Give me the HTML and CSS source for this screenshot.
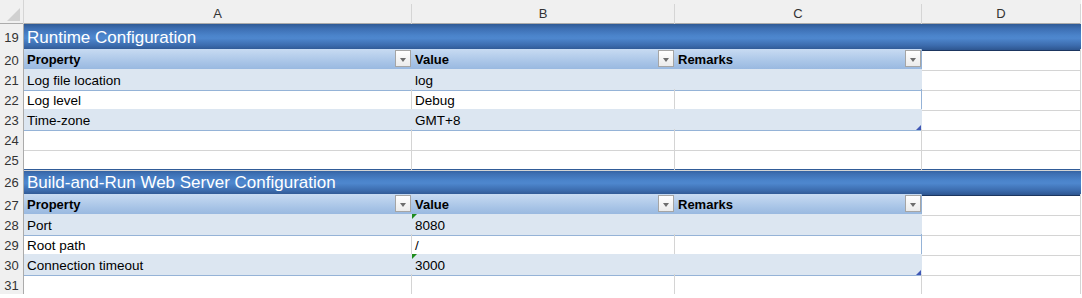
FILE: index.html
```html
<!DOCTYPE html>
<html>
<head>
  <title>Configuration</title>
  <link rel="stylesheet" href="styles.css">
</head>
<body>
  <div class="sheet">
    <div class="row colhead">
      <div class="corner"><span class="corner-tri"></span></div>
      <div class="ch">A</div>
      <div class="ch">B</div>
      <div class="ch">C</div>
      <div class="ch">D</div>
    </div>

    <div class="row title">
      <div class="rh">19</div>
      <div class="title-cell">Runtime Configuration</div>
    </div>
    <div class="row thead">
      <div class="rh">20</div>
      <div class="c th">Property<span class="dd"></span></div>
      <div class="c th">Value<span class="dd"></span></div>
      <div class="c th last">Remarks<span class="dd"></span></div>
      <div class="c"></div>
    </div>
    <div class="row band">
      <div class="rh">21</div>
      <div class="c">Log file location</div>
      <div class="c">log</div>
      <div class="c last"></div>
      <div class="c"></div>
    </div>
    <div class="row tbl">
      <div class="rh">22</div>
      <div class="c">Log level</div>
      <div class="c">Debug</div>
      <div class="c last"></div>
      <div class="c"></div>
    </div>
    <div class="row band">
      <div class="rh">23</div>
      <div class="c">Time-zone</div>
      <div class="c">GMT+8</div>
      <div class="c last"><span class="resize"></span></div>
      <div class="c"></div>
    </div>
    <div class="row">
      <div class="rh">24</div>
      <div class="c"></div><div class="c"></div><div class="c"></div><div class="c"></div>
    </div>
    <div class="row">
      <div class="rh">25</div>
      <div class="c"></div><div class="c"></div><div class="c"></div><div class="c"></div>
    </div>

    <div class="row title">
      <div class="rh">26</div>
      <div class="title-cell">Build-and-Run Web Server Configuration</div>
    </div>
    <div class="row thead">
      <div class="rh">27</div>
      <div class="c th">Property<span class="dd"></span></div>
      <div class="c th">Value<span class="dd"></span></div>
      <div class="c th last">Remarks<span class="dd"></span></div>
      <div class="c"></div>
    </div>
    <div class="row band">
      <div class="rh">28</div>
      <div class="c">Port</div>
      <div class="c"><span class="flag"></span>8080</div>
      <div class="c last"></div>
      <div class="c"></div>
    </div>
    <div class="row tbl">
      <div class="rh">29</div>
      <div class="c">Root path</div>
      <div class="c">/</div>
      <div class="c last"></div>
      <div class="c"></div>
    </div>
    <div class="row band">
      <div class="rh">30</div>
      <div class="c">Connection timeout</div>
      <div class="c"><span class="flag"></span>3000</div>
      <div class="c last"><span class="resize"></span></div>
      <div class="c"></div>
    </div>
    <div class="row">
      <div class="rh">31</div>
      <div class="c"></div><div class="c"></div><div class="c"></div><div class="c"></div>
    </div>
  </div>
</body>
</html>
```

FILE: styles.css
```css
body {
margin: 0;
background-color: #fff;
color: #000;
font-family: "Liberation Sans", Arial, sans-serif;
font-size: 13px;
overflow: hidden;
}
.sheet {
width: 1081px;
}
.row {
display: grid;
grid-template-columns: 24px 388px 263px 247px 159px;
height: 20px;
}
.row > div {
box-sizing: border-box;
}
.colhead {
height: 24px;
background-color: #f0f0f0;
padding-top: 4px;
border-bottom: 1px solid #ababab;
box-sizing: border-box;
}
.corner {
position: relative;
border-right: 1px solid #d5d5d5;
margin-top: -4px;
}
.corner-tri {
position: absolute;
right: 3px;
bottom: 3px;
width: 0;
height: 0;
border-left: 13px solid transparent;
border-bottom: 13px solid #d0d0d0;
}
.ch {
border-right: 1px solid #d5d5d5;
text-align: center;
line-height: 20px;
color: #333;
font-size: 13px;
}
.rh {
background-color: #f0f0f0;
border-right: 1px solid #ababab;
border-bottom: 1px solid #d5d5d5;
color: #333;
text-align: center;
padding-top: 2px;
line-height: 19px;
font-size: 13px;
}
.c {
position: relative;
border-right: 1px solid #d4d4d4;
border-bottom: 1px solid #d4d4d4;
padding: 2px 3px 0;
line-height: 19px;
font-size: 13.5px;
white-space: nowrap;
}
.title {
height: 25px;
}
.title .rh {
padding-top: 4px;
}
.title-cell {
grid-column: 2 / 6;
background: linear-gradient(#2f5a95 0%, #3d6fb3 18%, #4b84cb 45%, #4e87ce 55%, #3c6cae 82%, #2e5690 100%);
border-bottom: 1px solid #1b355f;
color: #fff;
font-size: 17px;
padding: 1px 3px 0;
line-height: 25px;
}
.thead .th {
background: linear-gradient(#c8dbf2, #a9c5e7 60%, #97b7df);
border-right-color: transparent;
border-bottom: 1px solid #94b4dd;
font-weight: bold;
font-size: 13px;
padding-top: 1px;
padding-right: 20px;
}
.thead .th.last {
border-right-color: #95b3d7;
}
.dd {
position: absolute;
right: 0;
top: 1px;
width: 16px;
height: 17px;
box-sizing: border-box;
border: 1px solid #a5a5a5;
background: linear-gradient(#fff, #ebebeb);
}
.dd::after {
content: '';
position: absolute;
left: 4px;
top: 7px;
border-left: 3.5px solid transparent;
border-right: 3.5px solid transparent;
border-top: 4px solid #6d6d6d;
}
.band .c,
.tbl .c {
border-bottom-color: #95b3d7;
}
.band .c:nth-child(n+2):nth-child(-n+4) {
background-color: #dce6f1;
border-right-color: #dce6f1;
}
.band .c:last-child,
.tbl .c:last-child {
border-bottom-color: #d4d4d4;
}
.band .c.last,
.tbl .c.last {
border-right-color: #95b3d7;
}
.flag {
position: absolute;
left: 0;
top: 0;
width: 0;
height: 0;
border-top: 5px solid #1e8c1e;
border-right: 5px solid transparent;
}
.resize {
position: absolute;
right: 0;
bottom: 0;
width: 0;
height: 0;
border-bottom: 5px solid #3f57b5;
border-left: 5px solid transparent;
}
```
